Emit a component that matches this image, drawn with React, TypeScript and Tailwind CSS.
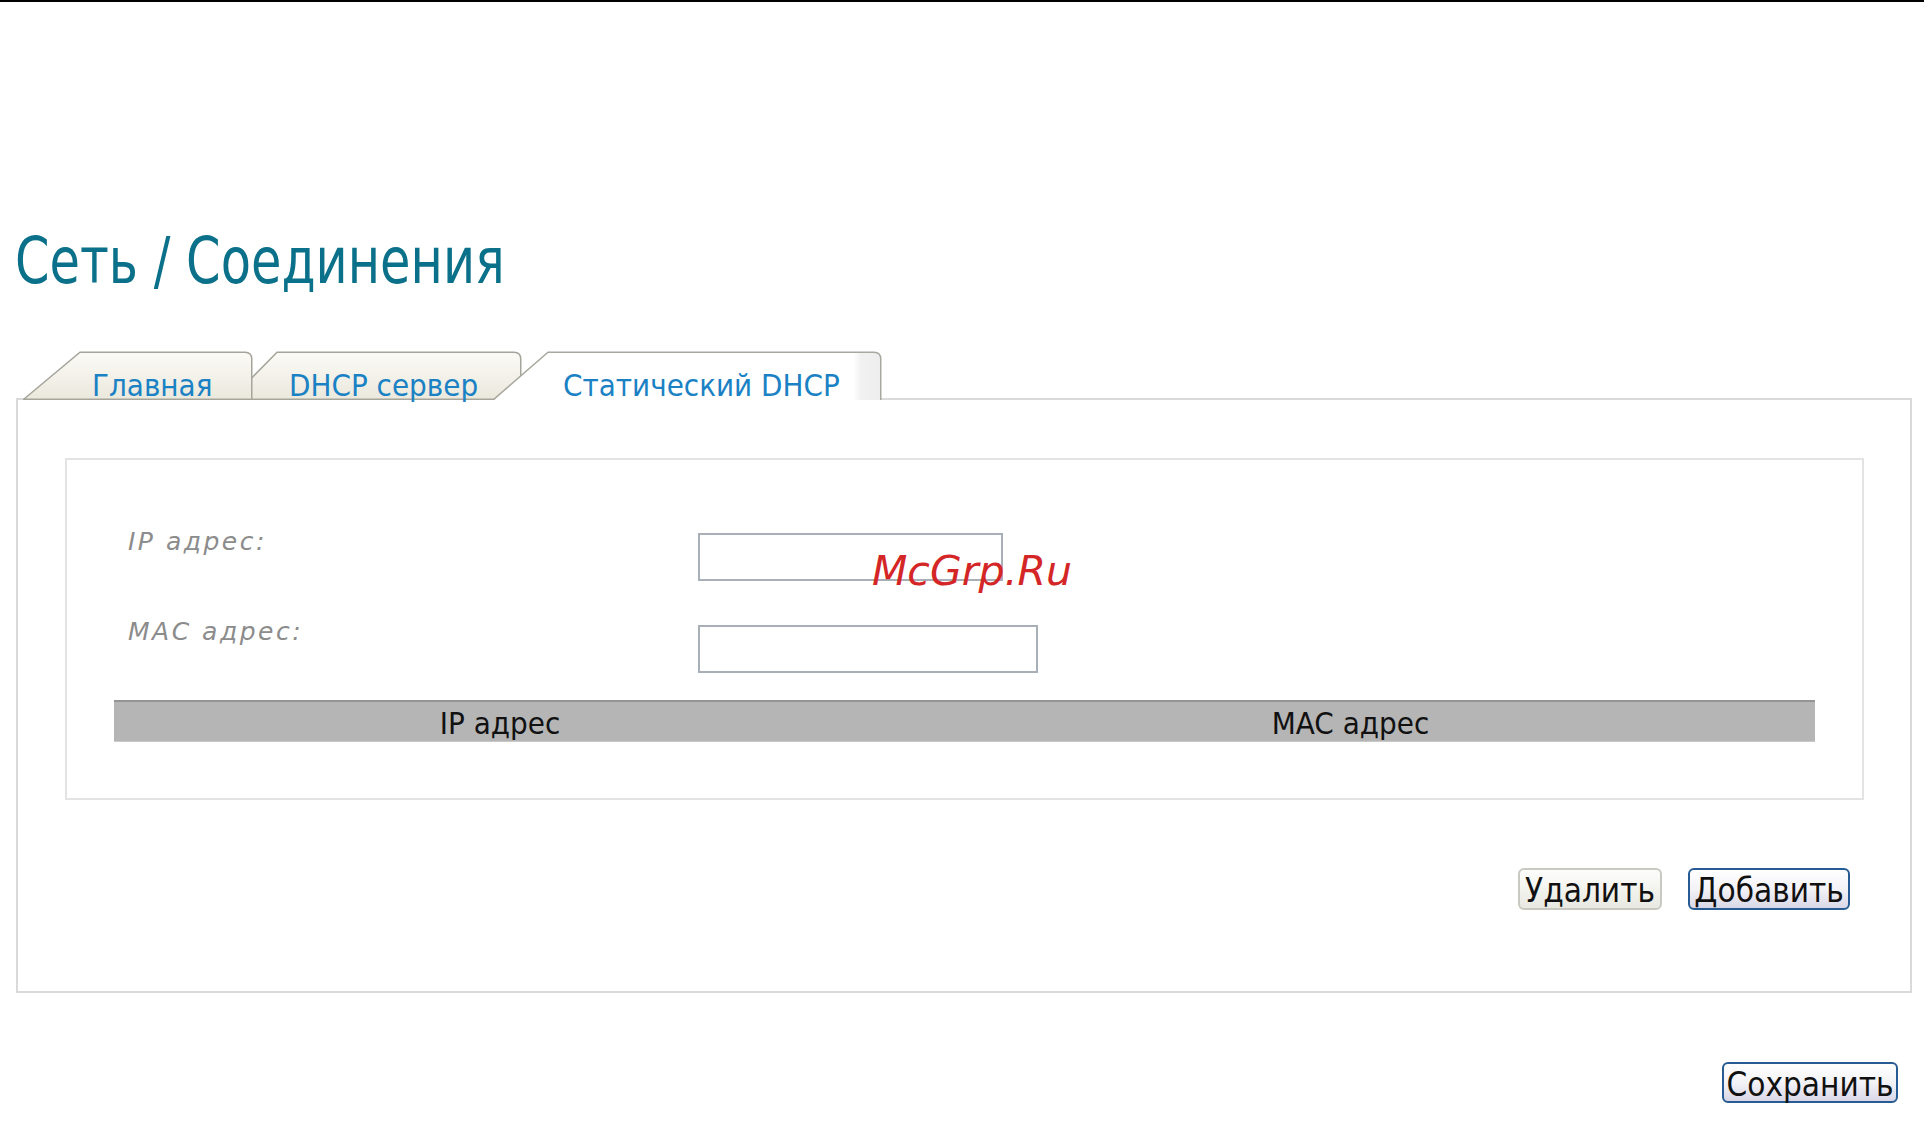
import React from "react";

function TabShape({ w, active, id }: { w: number; active?: boolean; id: string }) {
  const d = active ? 55 : w === 230 ? 57 : 47;
  return (
    <svg className="absolute left-0 top-0" width={w} height={49} viewBox={`0 0 ${w} 49`}>
      <defs>
        {active ? (
          <linearGradient id={id} x1="0" y1="0" x2="1" y2="0">
            <stop offset="0" stopColor="#ffffff" />
            <stop offset="0.93" stopColor="#ffffff" />
            <stop offset="0.95" stopColor="#f1f1f1" />
            <stop offset="1" stopColor="#eeeeee" />
          </linearGradient>
        ) : (
          <linearGradient id={id} x1="0" y1="0" x2="0" y2="1">
            <stop offset="0" stopColor="#fbfaf6" />
            <stop offset="1" stopColor="#ebe9dd" />
          </linearGradient>
        )}
      </defs>
      {active ? (
        <>
          <path d={`M0 50 L${d} 1.25 L${w - 8} 1.25 Q${w - 1.25} 1.25 ${w - 1.25} 8 L${w - 1.25} 50 Z`} fill={`url(#${id})`} />
          <path d={`M0 49 L${d} 1.25 L${w - 8} 1.25 Q${w - 1.25} 1.25 ${w - 1.25} 8 L${w - 1.25} 49`} fill="none" stroke="#a9a89f" strokeWidth="1.5" />
        </>
      ) : (
        <path d={`M0.75 48.25 L${d} 1.25 L${w - 8} 1.25 Q${w - 1.25} 1.25 ${w - 1.25} 8 L${w - 1.25} 48.25 Z`} fill={`url(#${id})`} stroke="#a6a59b" strokeWidth="1.5" />
      )}
    </svg>
  );
}

export default function App() {
  return (
    <div className="relative w-[1930px] h-[1143px] overflow-hidden bg-white font-['DejaVu_Sans_Condensed','Liberation_Sans',sans-serif]">
      <div className="h-[2px] w-[1924px] bg-black" />
      <h1 className="mt-[236px] origin-bottom-left scale-y-[1.15] pl-[15px] text-[55px] leading-[55px] font-normal text-[#0b7089]">Сеть / Соединения</h1>

      <div className="relative z-10 mt-[58px] flex h-[49px] pl-[23px]">
        <div className="relative z-20 flex h-[49px] w-[230px] items-end pl-[69px]">
          <TabShape w={230} id="t1" />
          <span className="relative text-[31px] leading-[30px] text-[#1a82c4]">Главная</span>
        </div>
        <div className="relative z-10 -ml-[23px] flex h-[49px] w-[292px] items-end pl-[59px]">
          <TabShape w={292} id="t2" />
          <span className="relative text-[31px] leading-[30px] text-[#1a82c4]">DHCP сервер</span>
        </div>
        <div className="relative z-30 -ml-[29px] flex h-[49px] w-[389px] items-end pl-[70px]">
          <TabShape w={389} id="t3" active />
          <span className="relative text-[31px] leading-[30px] text-[#1a82c4]">Статический DHCP</span>
        </div>
      </div>

      <div className="-mt-[2px] ml-[16px] h-[595px] w-[1896px] border-2 border-[#dadada] pt-[58px]">
        <div className="ml-[47px] h-[342px] w-[1799px] border-2 border-[#e3e3e3] pt-[73px]">
          <div className="flex h-[48px]">
            <div className="w-[631px] pl-[61px]">
              <span className="font-['DejaVu_Sans',sans-serif] text-[25px] italic leading-[17px] tracking-[2.5px] text-[#8c8c8c]">IP адрес:</span>
            </div>
            <div className="h-[48px] w-[305px] border-2 border-[#a8afb7] bg-white" />
          </div>
          <div className="mt-[44px] flex h-[48px]">
            <div className="-mt-[2px] w-[631px] pl-[61px]">
              <span className="font-['DejaVu_Sans',sans-serif] text-[25px] italic leading-[17px] tracking-[2.5px] text-[#8c8c8c]">MAC адрес:</span>
            </div>
            <div className="h-[48px] w-[340px] border-2 border-[#a8afb7] bg-white" />
          </div>
          <div className="ml-[47px] mt-[27px] grid h-[42px] w-[1701px] grid-cols-[772px_1fr] border-t-2 border-b border-t-[#959595] border-b-[#c9c9c9] bg-[#b5b5b5] text-[31px] text-[#111]">
            <div className="pt-[2px] text-center leading-[38px]">IP адрес</div>
            <div className="pt-[2px] text-center leading-[38px]">MAC адрес</div>
          </div>
        </div>

        <div className="mt-[68px] flex justify-end gap-[26px] pr-[60px]">
          <button className="h-[42px] w-[144px] rounded-[6px] border-2 border-[#c9c9c1] bg-gradient-to-b from-[#fdfdfb] to-[#e9e9e2] pt-[4px] text-[33px] leading-[34px] text-[#111]">Удалить</button>
          <button className="h-[42px] w-[162px] rounded-[6px] border-2 border-[#265b93] bg-gradient-to-b from-white via-[#f3f3f7] to-[#d9d7e7] pt-[4px] text-[33px] leading-[34px] text-[#111]">Добавить</button>
        </div>
      </div>

      <div className="mt-[69px] flex justify-end pr-[32px]">
        <button className="h-[41px] w-[176px] rounded-[6px] border-2 border-[#265b93] bg-gradient-to-b from-white via-[#f3f3f7] to-[#d9d7e7] pt-[4px] text-[33px] leading-[34px] text-[#111]">Сохранить</button>
      </div>

      <div className="absolute left-[872px] top-[551px] z-40 font-['DejaVu_Sans',sans-serif] text-[41px] italic leading-[41px] text-[#d42626]">McGrp.Ru</div>
    </div>
  );
}
